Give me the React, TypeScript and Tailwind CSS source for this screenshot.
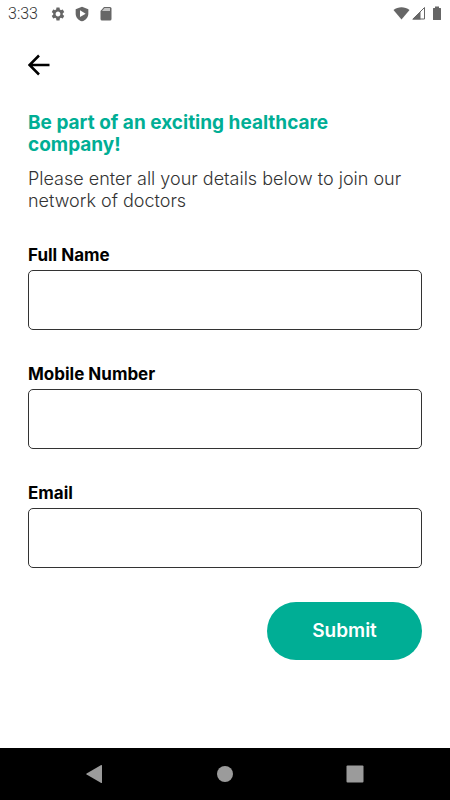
import { useState, type FormEvent } from 'react';
import { MdSettings } from 'react-icons/md';

type FieldName = 'name' | 'mobile' | 'email';

const fields: { name: FieldName; label: string; type: string }[] = [
    { name: 'name', label: 'Full Name', type: 'text' },
    { name: 'mobile', label: 'Mobile Number', type: 'tel' },
    { name: 'email', label: 'Email', type: 'email' },
];

function StatusBar() {
    return (
        <div className="flex h-7 items-center justify-between px-2 text-[#666666]">
            <div className="flex items-center gap-2">
                <span className="mr-1 font-['Roboto',sans-serif] text-base leading-5 font-light text-[#333333]">3:33</span>
                <MdSettings className="size-4" aria-hidden="true" />
                <svg className="size-4" viewBox="0 0 24 24" fill="currentColor" aria-hidden="true">
                    <path
                        fillRule="evenodd"
                        d="M12 1 2.5 4.8v6.7c0 5.5 4 10 9.5 11.5 5.5-1.5 9.5-6 9.5-11.500V4.800zM9 6.500v10l8.500-5z"
                    />
                </svg>
                <svg className="size-4" viewBox="0 0 16 16" aria-hidden="true">
                    <path d="M6 1h6q1.500 0 1.500 1.500v10.500q0 1.500-1.500 1.500H4q-1.500 0-1.500-1.500V5z" fill="currentColor" />
                    <path d="M6.500 2h5.500v3H4z" fill="#c4c4c4" />
                </svg>
            </div>
            <div className="flex items-center">
                <svg className="h-4 w-[17px]" viewBox="0 0 17 16" fill="currentColor" aria-hidden="true">
                    <path d="M0.500 4C5 0.400 12 0.400 16.500 4L8.500 13.500z" />
                </svg>
                <svg className="ml-px h-4 w-[15px]" viewBox="0 0 15 16" aria-hidden="true">
                    <path d="M13.500 1.500V13H2z" fill="#ffffff" stroke="currentColor" />
                    <path d="M9.500 5.500V13.500H1z" fill="currentColor" />
                </svg>
                <svg className="ml-1.5 h-4 w-2.5" viewBox="0 0 10 16" fill="currentColor" aria-hidden="true">
                    <path d="M3 0.500h4v1.500h1.500q.5 0 .5.5v11q0 .5-.5.5h-7Q1 14 1 13.500V2.500q0-.5.5-.5H3z" />
                </svg>
            </div>
        </div>
    );
}

function NavigationBar() {
    return (
        <nav className="flex h-[52px] items-center justify-center gap-[106px] bg-black text-[#9b9b9b]">
            <button type="button" aria-label="System back">
                <svg className="size-6" viewBox="0 0 24 24" fill="currentColor" aria-hidden="true">
                    <path d="M19 3.500v17q0 .8-.8.500L3.600 12.600q-.8-.6 0-1.200L18.200 3q.8-.3.8.500z" />
                </svg>
            </button>
            <button type="button" aria-label="Home">
                <svg className="size-6" viewBox="0 0 24 24" fill="currentColor" aria-hidden="true">
                    <circle cx="12" cy="12" r="8" />
                </svg>
            </button>
            <button type="button" aria-label="Recent apps">
                <svg className="size-6" viewBox="0 0 24 24" fill="currentColor" aria-hidden="true">
                    <rect x="3.500" y="3.500" width="17" height="17" rx="1" />
                </svg>
            </button>
        </nav>
    );
}

export default function App() {
    const [values, setValues] = useState<Record<FieldName, string>>({ name: '', mobile: '', email: '' });

    const handleSubmit = (e: FormEvent) => {
        e.preventDefault();
    };

    return (
        <div className="flex min-h-screen flex-col bg-white font-['Inter',sans-serif] text-black">
            <StatusBar />

            <main className="flex-1 px-7 pt-6">
                <button type="button" aria-label="Go back" className="block">
                    <svg className="h-6 w-[22px]" viewBox="0 0 22 24" fill="none" stroke="currentColor" strokeWidth="2.500" aria-hidden="true">
                        <path d="M11 3.500 1.500 13l9.500 9.500M1.500 13H21.500" />
                    </svg>
                </button>

                <h1 className="mt-9 text-[19px] leading-[22px] font-bold text-[#00ae95]">
                    Be part of an exciting healthcare
                    <br />
                    company!
                </h1>
                <p className="mt-3 text-lg leading-[22px] font-light text-[#333333]">
                    Please enter all your details below to join our
                    <br />
                    network of doctors
                </p>

                <form onSubmit={handleSubmit} className="mt-[33px] flex flex-col gap-[34px]">
                    {fields.map((field) => (
                        <div key={field.name} className="flex flex-col gap-[5px]">
                            <label htmlFor={field.name} className="text-[17px] leading-5 font-bold">
                                {field.label}
                            </label>
                            <input
                                id={field.name}
                                name={field.name}
                                type={field.type}
                                value={values[field.name]}
                                onChange={(e) => setValues({ ...values, [field.name]: e.target.value })}
                                className="h-[60px] w-full rounded-[5px] border border-[#333333] px-4 text-base"
                            />
                        </div>
                    ))}
                    <button type="submit" className="h-[58px] w-[155px] self-end rounded-full bg-[#00ae95] text-[19px] font-semibold text-white">
                        Submit
                    </button>
                </form>
            </main>

            <NavigationBar />
        </div>
    );
}
